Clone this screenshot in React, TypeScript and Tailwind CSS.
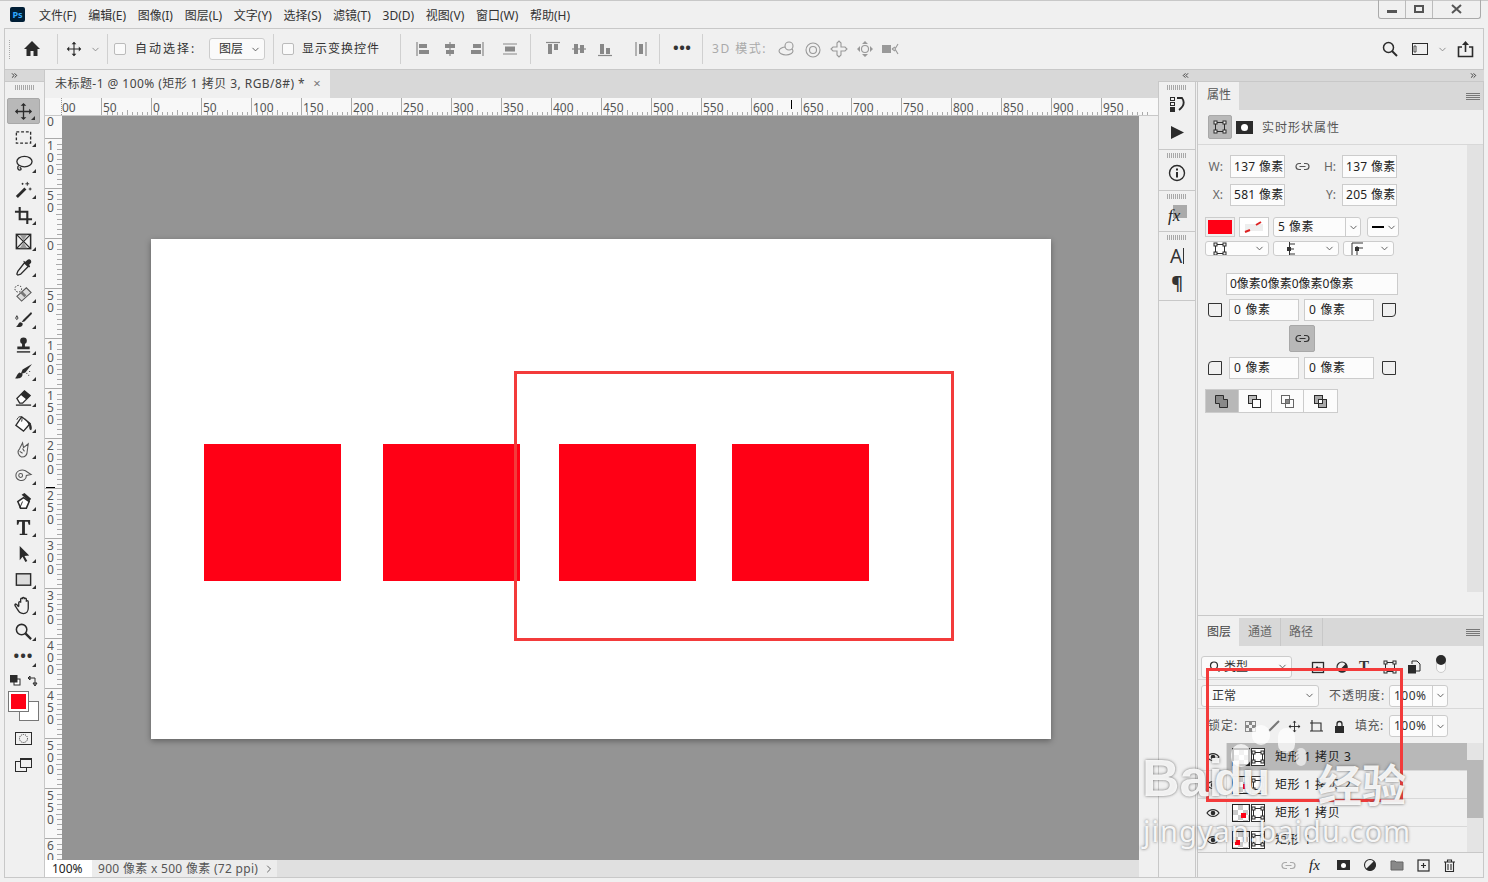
import React from "react";
import { ChevronDown, ChevronRight, ChevronsLeft, ChevronsRight } from "lucide-react";

const FONT = "font-['Noto_Sans','Noto_Sans_CJK_SC',sans-serif]";

const menus = ["文件(F)", "编辑(E)", "图像(I)", "图层(L)", "文字(Y)", "选择(S)", "滤镜(T)", "3D(D)", "视图(V)", "窗口(W)", "帮助(H)"];

const Svg = ({ size = 20, vb = 20, children, className = "" }: { size?: number; vb?: number; children: React.ReactNode; className?: string }) => (
  <svg width={size} height={size} viewBox={`0 0 ${vb} ${vb}`} fill="none" stroke="#2b2b2b" strokeWidth={1.4} className={`shrink-0 ${className}`}>
    {children}
  </svg>
);

const MoveGlyph = () => (
  <g>
    <path d="M10 2v16M2 10h16" />
    <path d="M10 1l3 3H7zM10 19l-3-3h6zM1 10l3-3v6zM19 10l-3 3V7z" fill="#2b2b2b" stroke="none" />
  </g>
);

const tools: React.ReactNode[] = [
  <MoveGlyph />,
  <rect x="2.500" y="4" width="15" height="12" strokeDasharray="3 2" />,
  <g><ellipse cx="11" cy="8" rx="8" ry="5.500" /><path d="M5 12c-2 2-1 5 1 5s2-2 0-3" /></g>,
  <g><path d="M3 18L12 9" strokeWidth={3} /><path d="M14 2v4M12 4h4M17 8v3M15.500 9.500h3M9 3v2M8 4h2" strokeWidth={1} /></g>,
  <g strokeWidth={2.200}><path d="M6 1v13h13" /><path d="M1 6h13v13" /></g>,
  <g><rect x="2.500" y="2.500" width="15" height="15" strokeWidth={1.600} /><path d="M3 3l14 14M17 3L3 17" /><path d="M6 3h8l-4 6zM6 17h8l-4-6z" fill="#999" stroke="none" /></g>,
  <g><path d="M11 5l4 4-8 8-3 1-1-1 1-3z" /><path d="M10 4l6 6 1-1-1-2 2-2c1-3-2-5-4-3l-2 2-2-1z" fill="#2b2b2b" stroke="none" /></g>,
  <g><path d="M3 13L13 4l5 5L8 18z" fill="#ddd" stroke="#555" strokeWidth={1.100} /><path d="M8 9l4 4" strokeWidth={3} stroke="#777" /><circle cx="4.500" cy="5" r="3.500" strokeDasharray="1.500 1.500" strokeWidth={1} /></g>,
  <g><path d="M18 2L10 10l-2 3 3-1 8-8z" fill="#2b2b2b" stroke="none" /><path d="M7 13c-3 0-2 4-5 4 3 2 8 1 7-3z" fill="#2b2b2b" stroke="none" /><path d="M3 6c-1 2-2 3 0 4 2-1 1-2 0-4z" strokeWidth={1} /></g>,
  <g fill="#2b2b2b" stroke="none"><circle cx="10" cy="5" r="3.500" /><path d="M8.500 7h3v4h5v3h-13v-3h5z" /><rect x="3" y="16" width="14" height="1.500" /></g>,
  <g><path d="M19 2L9 8l-2 5 5-2z" fill="#2b2b2b" stroke="none" /><path d="M6 11c-3 1-3 5-5 6 4 1 8 0 8-4z" fill="#2b2b2b" stroke="none" /><path d="M13 12h1M16 10h1M15 14h1" strokeWidth={1} /></g>,
  <g><path d="M3 11l8-8 6 5-8 8H6z" fill="#fff" /><path d="M7 7l4-4 6 5-4 4z" fill="#2b2b2b" stroke="none" /><path d="M2 18h16" /></g>,
  <g><path d="M8 3l9 7-7 8-8-6z" fill="#fff" /><path d="M3 6c2-5 7-4 5 2" strokeWidth={1} /><path d="M11 4l7 7c1 3 1 5 0 6-2 0-2-3-2-5z" fill="#2b2b2b" stroke="none" /></g>,
  <g stroke="#555" strokeWidth={1.100}><path d="M8 18c-4-2-5-6-2-9l3-6 1 5 5-4-1 7c0 4-2 7-6 7z" /><path d="M6 12l3 2M9 9l2 3" /></g>,
  <g stroke="#555" strokeWidth={1.100}><path d="M2 10c0-5 6-7 10-5l6 4-5 1c0 4-3 6-7 5-3-1-4-3-4-5z" /><circle cx="7" cy="10" r="2" /></g>,
  <g><path d="M10 6l6 4-3 7H7L4 10z" fill="#fff" strokeWidth={1.600} /><path d="M8 3l3-2 7 6-2 3z" fill="#2b2b2b" stroke="none" /><path d="M9 10l-3 7" strokeWidth={1} /></g>,
  <g fill="#2b2b2b" stroke="none"><path d="M3 2h14v5h-1.500l-1-3H11.500v12.500H14V18H6v-1.500h2.500V4H5.500l-1 3H3z" /></g>,
  <path d="M6 2l10 10-5 .5 3 5.500-2 1-3-5.500L6 17z" fill="#2b2b2b" stroke="none" />,
  <rect x="2.500" y="4" width="15" height="12" fill="#dcdcdc" strokeWidth={1.500} />,
  <path d="M5 11V7c0-1.500 2-1.500 2 0V3.500c0-1.500 2-1.500 2 0v-1c0-1.500 2-1.500 2 0v1c0-1.500 2-1.500 2 0V6c0-1.500 2-1.500 2 0v7c0 3-2 5.500-5 5.500-4 0-5-2-7-5.500-1-2-3-3.500-1.500-4.500 1-.5 2 1 3.500 3" />,
  <g strokeWidth={1.600}><circle cx="8" cy="8" r="5.500" /><path d="M12 12l6 6" strokeWidth={2.400} /></g>,
];

const Corner = () => <span className="absolute right-[4px] bottom-[3px] w-0 h-0 border-l-[4px] border-l-transparent border-b-[4px] border-b-[#333]" />;

const Grip = ({ w = 20 }: { w?: number }) => (
  <div className="h-[5px] bg-[repeating-linear-gradient(90deg,#a8a8a8_0_1px,transparent_1px_2px)] mx-auto" style={{ width: w }} />
);

const Toolbar = () => (
  <div className="w-[41px] shrink-0 flex flex-col border-r border-[#c8c8c8] border-l">
    <div className="h-[12px] bg-[#d8d8d8] border-b border-[#c8c8c8] flex items-center pl-[5px]">
      <ChevronsRight size={9} strokeWidth={2.500} color="#333" />
    </div>
    <div className="pt-[3px] h-[16px]"><Grip /></div>
    {tools.map((t, i) => (
      <div key={i} className={`relative h-[26px] w-[33px] ml-[2px] flex items-center justify-center rounded-[2px] ${i === 0 ? "bg-[#b8b8b8] border border-[#a8a8a8]" : ""}`}>
        <Svg size={19}>{t}</Svg>
        <Corner />
      </div>
    ))}
    <div className="relative h-[26px] w-[33px] ml-[2px] flex items-center justify-center">
      <span className="text-[15px] leading-none font-bold tracking-[1px] text-[#333] -mt-[4px]">•••</span>
      <Corner />
    </div>
    <div className="flex items-center gap-[7px] ml-[5px] mt-[4px] h-[13px]">
      <Svg size={11} vb={11}>
        <rect x="4" y="4" width="6" height="6" fill="#fff" strokeWidth={1} />
        <rect x="0.500" y="0.500" width="6.500" height="6.500" fill="#2b2b2b" strokeWidth={1} />
      </Svg>
      <Svg size={11} vb={11}>
        <path d="M1 3h6v7M0 3l2-2v4zM7 11L5 8h4z" strokeWidth={1} />
      </Svg>
    </div>
    <div className="relative h-[30px] mt-[5px]">
      <div className="absolute left-[14px] top-[9px] w-[20px] h-[20px] bg-white border border-[#777]" />
      <div className="absolute left-[4px] top-0 w-[19px] h-[19px] bg-[#ff0015] border-2 border-white outline outline-1 outline-[#777]" />
    </div>
    <div className="mt-[8px] ml-[10px]">
      <Svg size={17} vb={17}>
        <rect x="0.500" y="2.500" width="16" height="12" strokeWidth={1} />
        <circle cx="8.500" cy="8.500" r="4" strokeDasharray="1 1" strokeWidth={1} />
      </Svg>
    </div>
    <div className="relative mt-[10px] ml-[10px] w-[17px] h-[17px]">
      <Svg size={17} vb={17}>
        <rect x="0.500" y="4.500" width="11" height="10" fill="#f0f0f0" strokeWidth={1} />
        <rect x="5.500" y="1.500" width="11" height="9" fill="#f0f0f0" strokeWidth={1} />
        <path d="M5.500 2h11" strokeWidth={2} />
      </Svg>
    </div>
  </div>
);

const Sep = ({ ml, mr }: { ml: number; mr: number }) => (
  <div className="w-px h-[30px] bg-[#d0d0d0] shrink-0" style={{ marginLeft: ml, marginRight: mr }} />
);

const Check = ({ className = "" }: { className?: string }) => (
  <span className={`w-[12px] h-[12px] bg-[#fafafa] border border-[#bbb] rounded-[2px] shrink-0 ${className}`} />
);

const A = ({ d, fill }: { d: string; fill: string }) => (
  <Svg size={16} vb={16}>
    <path d={d} stroke="#888" strokeWidth={1.200} />
    <path d={fill} fill="#888" stroke="none" />
  </Svg>
);

const OptionsBar = () => (
  <div className="mx-[4px] h-[42px] shrink-0 flex items-center border border-[#c8c8c8] text-[12px] text-[#333]">
    <div className="h-[20px] ml-[4px] bg-[repeating-linear-gradient(0deg,#aaa_0_1px,transparent_1px_2px)] w-px" />
    <Svg size={18} vb={18} className="ml-[13px]">
      <path d="M9 1L1 9h2.500v7h4v-5h3v5h4V9H17z" fill="#2b2b2b" stroke="none" />
    </Svg>
    <Sep ml={16} mr={8} />
    <Svg size={16}><MoveGlyph /></Svg>
    <ChevronDown size={11} color="#888" className="ml-[8px]" />
    <Sep ml={6} mr={6} />
    <Check />
    <span className="ml-[9px] w-[62px] tracking-[2px]">自动选择:</span>
    <div className="ml-[12px] w-[56px] h-[22px] bg-[#fafafa] border border-[#ccc] rounded-[3px] flex items-center pl-[9px] justify-between pr-[3px]">
      <span>图层</span>
      <ChevronDown size={11} color="#555" />
    </div>
    <Sep ml={8} mr={8} />
    <Check />
    <span className="ml-[8px] tracking-[1px]">显示变换控件</span>
    <Sep ml={20} mr={15} />
    <div className="flex items-center gap-[10px]">
      <A d="M1 1v14" fill="M3 3h8v4H3zM3 9h10v4H3z" />
      <A d="M8 1v14" fill="M3 3h10v4H3zM4 9h8v4H4z" />
      <A d="M15 1v14" fill="M5 3h8v4H5zM3 9h10v4H3z" />
    </div>
    <div className="ml-[18px]">
      <A d="M1 3h14M1 13h14" fill="M3 5.500h10v5H3z" />
    </div>
    <Sep ml={12} mr={14} />
    <div className="flex items-center gap-[10px]">
      <A d="M1 1.500h14" fill="M3 3h4v10H3zM9 3h4v6H9z" />
      <A d="M1 8h14" fill="M3 3h4v10H3zM9 4h4v8H9z" />
      <A d="M1 14.500h14" fill="M3 3h4v10H3zM9 7h4v6H9z" />
    </div>
    <div className="ml-[20px]">
      <A d="M3 1v14M13 1v14" fill="M6 3h4v10H6z" />
    </div>
    <Sep ml={10} mr={13} />
    <span className="text-[15px] font-bold leading-none tracking-[0.5px] w-[17px] -mt-[3px] whitespace-nowrap">•••</span>
    <Sep ml={12} mr={9} />
    <span className="tracking-[1.500px] text-[#aaa] w-[51px] whitespace-nowrap">3D 模式:</span>
    <div className="ml-[15px] flex items-center gap-[8px]">
      <Svg size={18} vb={18}><g stroke="#999" strokeWidth={1.100}><ellipse cx="8" cy="11" rx="7" ry="4" /><circle cx="11" cy="6" r="4" fill="#f0f0f0" /></g></Svg>
      <Svg size={18} vb={18}><g stroke="#999" strokeWidth={1.100}><circle cx="9" cy="10" r="7" /><circle cx="9" cy="10" r="3.500" /></g></Svg>
      <Svg size={18} vb={18}><path d="M7 7V3l2-2 2 2v4h4l2 2-2 2h-4v4l-2 2-2-2v-4H3L1 9l2-2z" stroke="#999" strokeWidth={1.100} /></Svg>
      <Svg size={18} vb={18}><g fill="#999" stroke="none"><path d="M9 1l3 3H6zM9 17l-3-3h6zM1 9l3-3v6zM17 9l-3 3V6z" /></g><circle cx="9" cy="9" r="3.500" stroke="#999" strokeWidth={1.100} /></Svg>
      <Svg size={18} vb={18}><rect x="0" y="5" width="9" height="8" fill="#999" stroke="none" /><path d="M10 9l3-2M10 9l3 2M16 4l-3 5 3 5" stroke="#999" strokeWidth={1.100} /></Svg>
    </div>
    <div className="ml-auto flex items-center">
      <Svg size={16} vb={16}><circle cx="6.500" cy="6.500" r="5" strokeWidth={1.500} /><path d="M10 10l5 5" strokeWidth={2} /></Svg>
      <Svg size={16} vb={16} className="ml-[14px]"><rect x="0.500" y="2.500" width="15" height="11" strokeWidth={1} /><path d="M2 5h2v6H2z" strokeWidth={0.800} /></Svg>
      <ChevronDown size={11} color="#888" className="ml-[9px]" />
      <Svg size={17} vb={17} className="ml-[9px] mr-[9px]"><path d="M5 6H1.500v9.500h14V6H12" strokeWidth={1.600} /><path d="M8.500 11V2" strokeWidth={1.600} /><path d="M8.500 0l3.500 4H5z" fill="#2b2b2b" stroke="none" /></Svg>
    </div>
  </div>
);

const TickSvgH = () => (
  <svg width="50" height="18" className="absolute inset-0" stroke="#aaa" strokeWidth={1}>
    {[5, 10, 15, 20, 25, 30, 35, 40, 45].map((x) => (
      <path key={x} d={x === 25 ? `M${x}.5 12v6` : `M${x}.5 14v4`} />
    ))}
  </svg>
);

const TickSvgV = () => (
  <svg width="17" height="50" className="absolute inset-0" stroke="#aaa" strokeWidth={1}>
    {[5, 10, 15, 20, 25, 30, 35, 40, 45].map((y) => (
      <path key={y} d={y === 25 ? `M11 ${y}.5h6` : `M12 ${y}.5h5`} />
    ))}
  </svg>
);

const topLabels = ["50", "0", "50", "100", "150", "200", "250", "300", "350", "400", "450", "500", "550", "600", "650", "700", "750", "800", "850", "900", "950"];
const sideLabels = ["100", "50", "0", "50", "100", "150", "200", "250", "300", "350", "400", "450", "500", "550", "600"];

const TopRuler = () => (
  <div className="relative h-[18px] shrink-0 bg-[#f8f8f8] flex overflow-hidden border-b border-[#c8c8c8] text-[12px] leading-none text-[#555]">
    <div className="w-[17px] shrink-0 border-r border-dotted border-[#999]" />
    <div className="w-[39px] shrink-0 relative"><span className="absolute left-0 top-[4px]">00</span></div>
    {topLabels.map((l, i) => (
      <div key={i} className="relative w-[50px] shrink-0 border-l border-[#aaa]">
        <TickSvgH />
        <span className="absolute left-[1px] top-[4px]">{l}</span>
      </div>
    ))}
    <span className="absolute left-[746px] top-[2px] w-px h-[9px] bg-black" />
  </div>
);

const LeftRuler = () => (
  <div className="relative w-[17px] shrink-0 bg-[#f8f8f8] overflow-hidden text-[12px] leading-[12px] text-[#555]">
    <div className="relative h-[23px] border-b border-[#aaa]"><span className="absolute left-[2px] top-0 flex flex-col">0</span></div>
    {sideLabels.map((l, i) => (
      <div key={i} className="relative h-[50px] border-b border-[#aaa]">
        <TickSvgV />
        <div className="absolute left-[2px] top-[1px] flex flex-col">
          {l.split("").map((c, j) => <span key={j}>{c}</span>)}
        </div>
      </div>
    ))}
    <span className="absolute left-[1px] top-[371px] w-[9px] h-px bg-black" />
  </div>
);

const squares = ["left-[53px]", "left-[232px]", "left-[408px]", "left-[581px]"];

const DocArea = () => (
  <div className="w-[1113px] shrink-0 flex flex-col">
    <div className="h-[28px] shrink-0 bg-[#d8d8d8] flex">
      <div className="w-[285px] bg-[#f0f0f0] flex items-center pl-[10px] text-[12px] text-[#444] whitespace-nowrap tracking-[0.45px]">
        未标题-1 @ 100% (矩形 1 拷贝 3, RGB/8#) *
        <span className="ml-[8px] text-[13px] text-[#777]">×</span>
      </div>
    </div>
    <TopRuler />
    <div className="flex flex-1 min-h-0">
      <LeftRuler />
      <div className="w-[1077px] shrink-0 bg-[#949494] pl-[89px] pt-[123px]">
        <div className="relative w-[900px] h-[500px] bg-white shadow-[0_2px_6px_rgba(0,0,0,0.35)]">
          {squares.map((s) => (
            <div key={s} className={`absolute top-[205px] w-[137px] h-[137px] bg-[#ff0015] ${s}`} />
          ))}
        </div>
      </div>
      <div className="w-[19px] shrink-0 bg-[#f0f0f0]" />
    </div>
    <div className="h-[17px] shrink-0 flex text-[12px] text-[#555]">
      <div className="w-[47px] bg-white pl-[7px] leading-[17px] text-[#222]">100%</div>
      <div className="w-[185px] bg-[#ececec] pl-[6px] leading-[17px] whitespace-nowrap flex items-center tracking-[0.3px]">
        900 像素 x 500 像素 (72 ppi)
        <ChevronRight size={12} color="#666" className="ml-[5px]" />
      </div>
      <div className="w-[862px] bg-[#e0e0e0]" />
    </div>
  </div>
);

const Section = ({ h, children }: { h: number; children: React.ReactNode }) => (
  <div className="border-b border-[#c8c8c8] flex flex-col items-center pt-[3px]" style={{ height: h }}>
    <Grip />
    {children}
  </div>
);

const Dock = () => (
  <div className="w-[38px] shrink-0 border-x border-[#c8c8c8] text-[#2b2b2b]">
    <Section h={68}>
      <Svg size={18} vb={18} className="mt-[5px]">
        <rect x="2.500" y="2.500" width="4" height="3" strokeWidth={1} />
        <rect x="2.500" y="7.500" width="4" height="3" strokeWidth={1} />
        <rect x="2" y="12" width="5" height="5" fill="#2b2b2b" stroke="none" />
        <path d="M9 3h5c3 4 2 8-3 12" strokeWidth={1.800} />
      </Svg>
      <svg width="15" height="15" viewBox="0 0 15 15" className="mt-[12px]"><path d="M1 1l13 6.500L1 14z" fill="#2b2b2b" /></svg>
    </Section>
    <Section h={41}>
      <Svg size={18} vb={18} className="mt-[6px]"><circle cx="9" cy="9" r="7.500" /><path d="M9 8v5.500" strokeWidth={2} /><path d="M9 4.500v2" strokeWidth={2} /></Svg>
    </Section>
    <Section h={41}>
      <div className="relative mt-[6px] w-[20px] h-[20px]">
        <span className="absolute right-0 top-0 w-[14px] h-[13px] bg-[#aaa]" />
        <span className="absolute left-[1px] top-[2px] font-['Liberation_Serif',serif] italic text-[17px] leading-[18px] text-[#222]">fx</span>
      </div>
    </Section>
    <Section h={69}>
      <div className="mt-[4px] text-[19px] leading-[24px] flex items-center text-[#333]">A<span className="w-px h-[16px] bg-[#333] ml-[1px]" /></div>
      <span className="mt-[4px] text-[18px] leading-[22px] font-bold text-[#333]">¶</span>
    </Section>
  </div>
);

const Menu3 = () => (
  <span className="w-[14px] flex flex-col gap-[1px]">
    <i className="block h-px bg-[#777]" /><i className="block h-px bg-[#777]" /><i className="block h-px bg-[#777]" /><i className="block h-px bg-[#777]" />
  </span>
);

const Field = ({ w, children, className = "" }: { w: number; children: React.ReactNode; className?: string }) => (
  <div className={`h-[22px] bg-[#fcfcfc] border border-[#ccc] flex items-center pl-[3px] text-[12px] text-[#222] whitespace-nowrap shrink-0 ${className}`} style={{ width: w }}>
    {children}
  </div>
);

const Select = ({ w, children }: { w: number; children?: React.ReactNode }) => (
  <div className="h-[15px] bg-[#fcfcfc] border border-[#ccc] rounded-[3px] flex items-center justify-between pr-[3px] pl-[7px] shrink-0 overflow-hidden" style={{ width: w }}>
    {children}
    <ChevronDown size={11} color="#555" />
  </div>
);

const Shape = () => (
  <Svg size={14} vb={14}>
    <rect x="2.500" y="2.500" width="9" height="9" strokeWidth={1} />
    <g fill="#f0f0f0" strokeWidth={1}><rect x="1" y="1" width="3" height="3" /><rect x="10" y="1" width="3" height="3" /><rect x="1" y="10" width="3" height="3" /><rect x="10" y="10" width="3" height="3" /></g>
  </Svg>
);

const Link2 = ({ c = "#555" }: { c?: string }) => (
  <Svg size={15} vb={15}><path d="M6 4.500H4a3 3 0 0 0 0 6h2M9 4.500h2a3 3 0 0 1 0 6H9M4.500 7.500h6" stroke={c} strokeWidth={1.200} /></Svg>
);

const Label = ({ t, w }: { t: string; w: number }) => (
  <span className="text-[12px] text-[#666] text-right shrink-0" style={{ width: w }}>{t}</span>
);

const Corners = ({ left, right }: { left: string; right: string }) => (
  <div className="h-[22px] flex items-center">
    <span className={`ml-[10px] w-[14px] h-[14px] border border-[#333] ${left}`} />
    <Field w={70} className="ml-[7px] !pl-[4px]"><span className="tracking-[0.7px]">0 像素</span></Field>
    <Field w={70} className="ml-[5px] !pl-[4px]"><span className="tracking-[0.7px]">0 像素</span></Field>
    <span className={`ml-[8px] w-[14px] h-[14px] border border-[#333] ${right}`} />
  </div>
);

const Properties = () => (
  <div className="h-[534px] shrink-0 flex flex-col border-b border-[#c8c8c8]">
    <div className="h-[28px] shrink-0 bg-[#d8d8d8] flex items-center justify-between pr-[3px]">
      <div className="w-[41px] h-full bg-[#f0f0f0] flex items-center pl-[9px] pb-[2px] text-[12px] text-[#555]">属性</div>
      <Menu3 />
    </div>
    <div className="h-[35px] shrink-0 flex items-center border-b border-[#d8d8d8]">
      <div className="ml-[10px] w-[24px] h-[24px] rounded-[2px] bg-[#b8b8b8] border border-[#a8a8a8] flex items-center justify-center"><Shape /></div>
      <div className="ml-[4px] w-[17px] h-[13px] bg-[#2b2b2b] flex items-center justify-center"><span className="w-[7px] h-[7px] rounded-full bg-white" /></div>
      <span className="ml-[9px] pt-[2px] text-[12px] text-[#555] tracking-[1px]">实时形状属性</span>
    </div>
    <div className="flex flex-1 min-h-0">
      <div className="w-[269px] shrink-0 flex flex-col">
        <div className="h-[23px] mt-[10px] flex items-center">
          <Label t="W:" w={25} />
          <Field w={55} className="ml-[7px] h-[23px] tracking-[0.3px]">137 像素</Field>
          <span className="ml-[10px]"><Link2 /></span>
          <Label t="H:" w={26} />
          <Field w={55} className="ml-[6px] h-[23px] tracking-[0.3px]">137 像素</Field>
        </div>
        <div className="h-[22px] mt-[6px] flex items-center">
          <Label t="X:" w={25} />
          <Field w={55} className="ml-[7px] tracking-[0.3px]">581 像素</Field>
          <span className="w-[25px]" />
          <Label t="Y:" w={26} />
          <Field w={55} className="ml-[6px] tracking-[0.3px]">205 像素</Field>
        </div>
        <div className="h-[20px] mt-[11px] flex items-center pl-[7px]">
          <div className="w-[30px] h-[20px] border border-[#ccc] p-[2px]"><div className="h-full bg-[#ff0015]" /></div>
          <div className="ml-[4px] w-[30px] h-[20px] border border-[#ccc] bg-white flex items-center justify-center">
            <svg width="22" height="12" viewBox="0 0 22 12"><rect x="2" y="3" width="18" height="7" fill="#eee" /><path d="M13 4l5-3M2 11l5-2" stroke="#d22" strokeWidth={2} /></svg>
          </div>
          <div className="ml-[4px] w-[88px] h-[20px] border border-[#ccc] rounded-[3px] bg-[#fcfcfc] flex items-center pl-[4px] text-[12px] text-[#222] tracking-[0.5px]">
            5 像素
            <span className="ml-auto w-[15px] h-full border-l border-[#ccc] flex items-center justify-center"><ChevronDown size={11} color="#555" /></span>
          </div>
          <div className="ml-[6px] w-[32px] h-[20px] border border-[#ccc] rounded-[3px] bg-[#fcfcfc] flex items-center pl-[4px] gap-[2px]">
            <span className="w-[12px] h-[2px] bg-black" />
            <ChevronDown size={11} color="#555" />
          </div>
        </div>
        <div className="mt-[4px] flex items-center gap-[4px] pl-[7px]">
          <Select w={64}><Shape /></Select>
          <Select w={66}><svg width="9" height="14" viewBox="0 0 9 14" fill="none" className="ml-[5px]"><path d="M3.500 0v14M3.500 2H9M3.500 7H8M3.500 12H9" stroke="#333" /><rect x="1" y="5" width="4" height="4" fill="#333" /></svg></Select>
          <Select w={51}><svg width="12" height="14" viewBox="0 0 12 14" fill="none"><path d="M1 13V1h11M6 4v10M8 6h4" stroke="#333" /><rect x="4" y="5" width="4" height="4" fill="#333" /></svg></Select>
        </div>
        <Field w={172} className="ml-[28px] mt-[17px]">0像素0像素0像素0像素</Field>
        <div className="mt-[4px]"><Corners left="rounded-bl-[3px]" right="rounded-br-[4px]" /></div>
        <div className="ml-[91px] mt-[4px] w-[26px] h-[27px] rounded-[2px] bg-[#b8b8b8] border border-[#a8a8a8] flex items-center justify-center"><Link2 c="#333" /></div>
        <div className="mt-[5px]"><Corners left="rounded-tl-[4px]" right="rounded-bl-[3px]" /></div>
        <div className="ml-[7px] mt-[10px] w-[133px] h-[24px] flex border border-[#ccc] bg-[#fcfcfc]">
          <div className="w-[33px] bg-[#b8b8b8] flex items-center justify-center border-r border-[#ccc]">
            <Svg size={15} vb={15}><path d="M1.500 1.500h8v4h4v8h-8v-4h-4z" fill="#888" strokeWidth={1} /></Svg>
          </div>
          <div className="w-[33px] flex items-center justify-center border-r border-[#ccc]">
            <Svg size={15} vb={15}><rect x="1.500" y="1.500" width="8" height="8" fill="#bbb" strokeWidth={1} /><rect x="5.500" y="5.500" width="8" height="8" fill="#fff" strokeWidth={1} /></Svg>
          </div>
          <div className="w-[33px] flex items-center justify-center border-r border-[#ccc]">
            <Svg size={15} vb={15}><g stroke="#666" strokeWidth={1}><rect x="1.500" y="1.500" width="8" height="8" /><rect x="5.500" y="5.500" width="8" height="8" /><rect x="5.500" y="5.500" width="4" height="4" fill="#888" /></g></Svg>
          </div>
          <div className="w-[33px] flex items-center justify-center">
            <Svg size={15} vb={15}><rect x="1.500" y="1.500" width="8" height="8" fill="#aaa" strokeWidth={1} /><rect x="5.500" y="5.500" width="8" height="8" fill="#aaa" strokeWidth={1} /><rect x="5.500" y="5.500" width="4" height="4" fill="#fff" strokeWidth={1} /></Svg>
          </div>
        </div>
      </div>
      <div className="w-[16px] shrink-0 bg-[#e2e2e2] h-[447px]" />
    </div>
  </div>
);

const layers = [
  { name: "矩形 1 拷贝 3", dot: "", h: "h-[28px]" },
  { name: "矩形 1 拷贝 2", dot: "left-[10px] top-[7px]", h: "h-[28px]" },
  { name: "矩形 1 拷贝", dot: "left-[8px] top-[8px]", h: "h-[28px]" },
  { name: "矩形 1", dot: "left-[2px] top-[8px]", h: "h-[27px] shrink-0" },
];

const Eye = () => (
  <Svg size={14} vb={14}>
    <path d="M1 7c3-4.500 9-4.500 12 0-3 4.500-9 4.500-12 0z" strokeWidth={1.200} />
    <circle cx="7" cy="7" r="2.300" fill="#2b2b2b" stroke="none" />
  </Svg>
);

const LayerRow = ({ l, active }: { l: (typeof layers)[number]; active: boolean }) => (
  <div className={`${l.h} flex items-center border-b border-[#d8d8d8] ${active ? "bg-[#b8b8b8]" : ""}`}>
    <span className="w-[29px] pl-[8px] h-full flex items-center border-r border-[#d8d8d8] bg-[#f0f0f0]"><Eye /></span>
    <div className={`relative ml-[5px] w-[18px] h-[18px] border-[#222] bg-[repeating-conic-gradient(#ccc_0_25%,#fff_0_50%)] bg-[length:10px_10px] ${active ? "border-2" : "border"}`}>
      {l.dot && <span className={`absolute w-[5px] h-[5px] bg-[#ff0015] ${l.dot}`} />}
    </div>
    <div className="ml-[1px] w-[14px] h-[18px] border border-[#333] bg-white flex items-center justify-center"><Shape /></div>
    <span className="ml-[10px] text-[12px] text-[#222] tracking-[0.6px]">{l.name}</span>
  </div>
);

const Layers = () => (
  <div className="mt-[2px] flex-1 flex flex-col min-h-0">
    <div className="h-[28px] shrink-0 bg-[#d8d8d8] flex items-center pr-[3px] text-[12px] text-[#666]">
      <div className="w-[41px] h-full bg-[#f0f0f0] flex items-center pl-[9px] text-[#444]">图层</div>
      <div className="w-[42px] h-full border-r border-[#c8c8c8] flex items-center pl-[9px]">通道</div>
      <div className="w-[42px] h-full border-r border-[#c8c8c8] flex items-center pl-[8px]">路径</div>
      <span className="ml-auto"><Menu3 /></span>
    </div>
    <div className="h-[34px] shrink-0 flex items-center pl-[3px] pt-[8px] border-b border-[#d8d8d8]">
      <div className="w-[91px] h-[22px] bg-[#fafafa] border border-[#ccc] rounded-[3px] flex items-center pl-[7px] pr-[3px] text-[12px] text-[#333] gap-[4px]">
        <Svg size={11} vb={11}><circle cx="5" cy="4.500" r="3.500" strokeWidth={1.200} /><path d="M7.500 7.500l3 3" /></Svg>
        <span>类型</span>
        <ChevronDown size={11} color="#555" className="ml-auto" />
      </div>
      <div className="ml-[19px] flex items-center gap-[10px]">
        <Svg size={14} vb={14}><rect x="1.500" y="2.500" width="11" height="10" strokeWidth={1.300} /><path d="M3 10l3-4 2 2 1-1 2 3z" fill="#2b2b2b" stroke="none" /></Svg>
        <Svg size={14} vb={14}><circle cx="7" cy="7" r="5" strokeWidth={1.200} /><path d="M11 3.500A5 5 0 0 1 3.500 11z" fill="#2b2b2b" stroke="none" /></Svg>
        <span className="w-[14px] text-[15px] font-bold leading-none text-[#333] font-['Liberation_Serif',serif]">T</span>
        <Shape />
        <Svg size={14} vb={14}><path d="M5 4V1h5l3 3v7H9" strokeWidth={1} /><rect x="1.500" y="5.500" width="7" height="7.500" fill="#2b2b2b" strokeWidth={1} /></Svg>
      </div>
      <div className="ml-[15px] w-[10px] h-[18px] rounded-full border border-[#ccc] bg-[#fafafa] relative -mt-[6px]">
        <span className="absolute -left-px -top-px w-[10px] h-[10px] rounded-full bg-[#2b2b2b]" />
      </div>
    </div>
    <div className="h-[29px] shrink-0 flex items-center pl-[3px] pt-[3px] border-b border-[#d8d8d8] text-[12px] text-[#333]">
      <div className="w-[118px] h-[22px] bg-[#fafafa] border border-[#ccc] rounded-[3px] flex items-center justify-between pl-[10px] pr-[3px]">
        <span>正常</span><ChevronDown size={11} color="#555" />
      </div>
      <span className="ml-[10px] w-[60px] whitespace-nowrap text-[#555] tracking-[1px]">不透明度:</span>
      <div className="w-[59px] h-[22px] bg-[#fcfcfc] border border-[#ccc] rounded-[3px] flex items-center pl-[4px] tracking-[0.5px]">
        100%
        <span className="ml-auto w-[15px] h-full border-l border-[#ccc] flex items-center justify-center"><ChevronDown size={11} color="#555" /></span>
      </div>
    </div>
    <div className="h-[34px] shrink-0 flex items-center pl-[10px] text-[12px] text-[#555]">
      <span className="w-[37px] tracking-[1px]">锁定:</span>
      <div className="w-[11px] h-[11px] bg-[repeating-conic-gradient(#888_0_25%,#eee_0_50%)] bg-[length:6px_6px] border border-[#888]" />
      <svg width="12" height="12" viewBox="0 0 12 12" className="ml-[12px]"><path d="M1 11l10-10" stroke="#777" strokeWidth={2} /></svg>
      <Svg size={13} vb={20} className="ml-[8px]"><MoveGlyph /></Svg>
      <Svg size={15} vb={15} className="ml-[8px]"><path d="M1 4h11v8H3V1M1 12h13" strokeWidth={1.100} /></Svg>
      <Svg size={13} vb={13} className="ml-[9px]"><path d="M4 6V4a2.500 2.500 0 0 1 5 0v2" strokeWidth={1.300} /><rect x="2" y="6" width="9" height="7" fill="#2b2b2b" stroke="none" /></Svg>
      <span className="ml-[9px] w-[33px] whitespace-nowrap tracking-[0.5px]">填充:</span>
      <div className="ml-[1px] w-[59px] h-[22px] bg-[#fcfcfc] border border-[#ccc] rounded-[3px] flex items-center pl-[4px] text-[#333] tracking-[0.5px]">
        100%
        <span className="ml-auto w-[15px] h-full border-l border-[#ccc] flex items-center justify-center"><ChevronDown size={11} color="#555" /></span>
      </div>
    </div>
    <div className="h-[109px] shrink-0 flex overflow-hidden">
      <div className="w-[269px] shrink-0">
        {layers.map((l, i) => <LayerRow key={l.name} l={l} active={i === 0} />)}
      </div>
      <div className="w-[16px] shrink-0 bg-[#e4e4e4] flex flex-col">
        <span className="mt-[7px] h-[10px]" />
        <span className="h-[58px] bg-[#b8b8b8]" />
      </div>
    </div>
    <div className="flex-1 border-t border-[#c8c8c8] flex items-center justify-end pr-[27px] gap-[13px]">
      <Link2 c="#aaa" />
      <span className="font-['Liberation_Serif',serif] italic text-[15px] text-[#222] leading-none w-[15px]">fx</span>
      <div className="w-[13px] h-[10px] bg-[#2b2b2b] flex items-center justify-center"><span className="w-[5px] h-[5px] rounded-full bg-white" /></div>
      <Svg size={14} vb={14}><circle cx="7" cy="7" r="5.500" strokeWidth={1.100} /><path d="M11 3A5.500 5.500 0 0 1 3 11z" fill="#2b2b2b" stroke="none" /></Svg>
      <Svg size={14} vb={14}><path d="M1 3h4l1 1h7v8H1z" fill="#888" stroke="#666" strokeWidth={1} /></Svg>
      <Svg size={13} vb={13}><rect x="1" y="1" width="11" height="11" strokeWidth={1.200} /><path d="M6.500 4v5M4 6.500h5" strokeWidth={1.200} /></Svg>
      <Svg size={13} vb={13}><path d="M1 3h11M4.500 3V1h4v2M2.500 3.500v9h8v-9M5 5v6M8 5v6" strokeWidth={1.100} /></Svg>
    </div>
  </div>
);

const RightPanels = () => (
  <div className="flex-1 flex flex-col min-w-0">
    <div className="h-[12px] shrink-0 bg-[#d8d8d8] border-b border-[#c8c8c8] flex items-center justify-between pl-[23px] pr-[6px]">
      <ChevronsLeft size={9} strokeWidth={2.500} color="#333" />
      <ChevronsRight size={9} strokeWidth={2.500} color="#333" />
    </div>
    <div className="flex flex-1 min-h-0">
      <Dock />
      <div className="ml-[1px] flex-1 flex flex-col border-l border-r border-[#c8c8c8] min-w-0">
        <Properties />
        <Layers />
      </div>
    </div>
  </div>
);

const wm = "absolute text-white/90 [text-shadow:0_0_3px_rgba(70,70,70,0.8)]";

export default function App() {
  return (
    <div className={`relative w-[1488px] h-[882px] overflow-hidden bg-[#f0f0f0] flex flex-col ${FONT}`}>
      <div className="h-[28px] shrink-0 border-t border-[#c8c8c8] flex items-center pl-[10px] text-[12px] text-[#333]">
        <div className="w-[15px] h-[15px] rounded-[2px] bg-[#001e36] flex items-center justify-center text-[9px] leading-none font-bold text-[#31a8ff]">Ps</div>
        <div className="ml-[14px] pt-[2px] flex gap-[11.7px] whitespace-nowrap">
          {menus.map((m) => <span key={m}>{m}</span>)}
        </div>
        <div className="ml-auto mr-[7px] -mt-[10px] h-[19px] flex border border-t-0 border-[#aaa] rounded-b-[3px]">
          <div className="w-[27px] border-r border-[#bbb] flex items-center justify-center"><span className="w-[10px] h-[3px] bg-[#555] mt-[4px]" /></div>
          <div className="w-[27px] border-r border-[#bbb] flex items-center justify-center"><span className="w-[10px] h-[8px] border-2 border-[#555]" /></div>
          <div className="w-[47px] flex items-center justify-center">
            <svg width="11" height="10" viewBox="0 0 11 10"><path d="M1 1l9 8M10 1L1 9" stroke="#555" strokeWidth={2} /></svg>
          </div>
        </div>
      </div>
      <OptionsBar />
      <div className="mx-[4px] h-[808px] shrink-0 flex border-b border-[#c8c8c8]">
        <Toolbar />
        <DocArea />
        <RightPanels />
      </div>

      {/* red annotation boxes drawn over the screenshot */}
      <div className="absolute left-[514px] top-[371px] w-[440px] h-[270px] border-[3px] border-[#f33b3b]" />
      <div className="absolute left-[1206px] top-[668px] w-[197px] h-[134px] border-[3px] border-[#f33b3b]" />

      {/* baidu watermark */}
      <div className={`${wm} left-[1142px] top-[752px] font-['Liberation_Sans',sans-serif] font-bold text-[52px] leading-none`}>Bai</div>
      <div className={`${wm} left-[1214px] top-[752px] font-['Liberation_Sans',sans-serif] font-bold text-[46px] leading-[54px]`}>du</div>
      <div className={`${wm} left-[1318px] top-[756px] font-['Noto_Sans_CJK_SC',sans-serif] font-bold text-[44px] leading-[54px]`}>经验</div>
      <div className={`${wm} left-[1143px] top-[812px] text-[29px] leading-[38px] tracking-[1px]`}>jingyan.baidu.com</div>
      <div className="absolute left-[1252px] top-[725px] w-[18px] h-[20px] rounded-full bg-white/75" />
      <div className="absolute left-[1278px] top-[728px] w-[17px] h-[25px] rounded-full bg-white/75" />
      <div className="absolute left-[1231px] top-[744px] w-[20px] h-[23px] rounded-full bg-white/75" />
      <div className="absolute left-[1296px] top-[748px] w-[10px] h-[18px] rounded-full bg-white/60" />
    </div>
  );
}
